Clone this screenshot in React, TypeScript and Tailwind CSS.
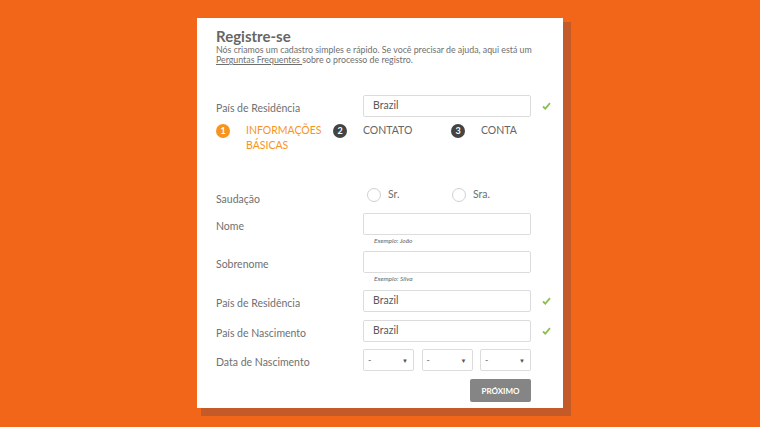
const Check = () => (
  <svg width="9" height="8" viewBox="0 0 9 8" className="ml-[11px] shrink-0">
    <polyline points="1,4.5 3.3,6.6 8,1.2" fill="none" stroke="#8cc152" strokeWidth="1.8" />
  </svg>
);

function Row({
  label,
  children,
  check,
  className = "",
}: {
  label: string;
  children: React.ReactNode;
  check?: boolean;
  className?: string;
}) {
  return (
    <div className={`flex items-center ${className}`}>
      <div className="w-[147px] shrink-0 pt-[4px] text-[10.5px] leading-[14px] text-[#707070]">{label}</div>
      {children}
      {check && <Check />}
    </div>
  );
}

function TextInput({ value = "" }: { value?: string }) {
  return (
    <div className="flex h-[22px] w-[168px] shrink-0 items-center rounded-[2px] border border-[#dcdcdc] bg-white pl-[9px] text-[10.5px] text-[#5a5a5a]">
      {value}
    </div>
  );
}

function Hint({ text }: { text: string }) {
  return (
    <div className="flex h-[11px] items-center pl-[158px] text-[6.5px] italic text-[#666]">{text}</div>
  );
}

function Select() {
  return (
    <div className="flex h-[22px] w-[51px] items-center justify-between rounded-[2px] border border-[#dcdcdc] bg-white pl-[4px] pr-[5px] text-[9px] text-[#666]">
      <span>-</span>
      <span className="text-[6px] text-[#555]">▼</span>
    </div>
  );
}

function Step({ n, active, lines, w }: { n: number; active?: boolean; lines: string[]; w: string }) {
  return (
    <div className={`flex items-start ${w}`}>
      <div
        className={`mt-[0.5px] flex h-[14px] w-[14px] shrink-0 items-center justify-center rounded-full text-[9px] font-bold text-white ${
          active ? "bg-[#f7941d]" : "bg-[#444]"
        }`}
      >
        {n}
      </div>
      <div
        className={`ml-[16px] text-[10.5px] leading-[15px] ${active ? "text-[#f7941d]" : "text-[#666]"}`}
      >
        {lines.map((l) => (
          <div key={l}>{l}</div>
        ))}
      </div>
    </div>
  );
}

function Radio({ label }: { label: string }) {
  return (
    <div className="flex items-start">
      <div className="h-[14px] w-[14px] rounded-full border border-[#d0d0d0] bg-white" />
      <span className="ml-[7px] text-[10.5px] leading-[12px] text-[#707070]">{label}</span>
    </div>
  );
}

export default function App() {
  return (
    <div
      className="min-h-[427px] w-full overflow-hidden bg-[#f26619] pt-[18px]"
      style={{ fontFamily: "Lato, 'Open Sans', sans-serif" }}
    >
      <div className="mx-auto h-[390px] w-[366px] bg-white pl-[19px] pr-[32px] pt-[9px] shadow-[6px_6px_0_2px_#c45a27]">
        <h1 className="text-[15px] font-bold leading-[18px] text-[#666]">Registre-se</h1>
        <p className="mr-[-20px] whitespace-nowrap text-[8.8px] leading-[10px] text-[#6f6f6f]">
          Nós criamos um cadastro simples e rápido. Se você precisar de ajuda, aqui está um
          <br />
          <span className="underline">Perguntas Frequentes </span>sobre o processo de registro.
        </p>

        <Row label="País de Residência" check className="mt-[30px]">
          <TextInput value="Brazil" />
        </Row>

        <div className="mt-[6px] flex">
          <Step n={1} active lines={["INFORMAÇÕES", "BÁSICAS"]} w="w-[117px]" />
          <Step n={2} lines={["CONTATO"]} w="w-[118px]" />
          <Step n={3} lines={["CONTA"]} w="w-[80px]" />
        </div>

        <div className="mt-[35px] flex items-start">
          <div className="mt-[4px] w-[147px] shrink-0 text-[10.5px] leading-[14px] text-[#707070]">Saudação</div>
          <div className="ml-[4px] flex">
            <div className="w-[85px]">
              <Radio label="Sr." />
            </div>
            <Radio label="Sra." />
          </div>
        </div>

        <Row label="Nome" className="mt-[7px]">
          <TextInput />
        </Row>
        <Hint text="Exemplo: João" />

        <Row label="Sobrenome" className="mt-[5px]">
          <TextInput />
        </Row>
        <Hint text="Exemplo: Silva" />

        <Row label="País de Residência" check className="mt-[6px]">
          <TextInput value="Brazil" />
        </Row>

        <Row label="País de Nascimento" check className="mt-[8px]">
          <TextInput value="Brazil" />
        </Row>

        <Row label="Data de Nascimento" className="mt-[7px]">
          <div className="flex w-[168px] shrink-0 justify-between">
            <Select />
            <Select />
            <Select />
          </div>
        </Row>

        <div className="mt-[8px] flex justify-end">
          <button className="h-[23px] w-[61px] rounded-[2px] bg-[#858585] text-[8px] font-bold text-white">
            PRÓXIMO
          </button>
        </div>
      </div>
    </div>
  );
}
